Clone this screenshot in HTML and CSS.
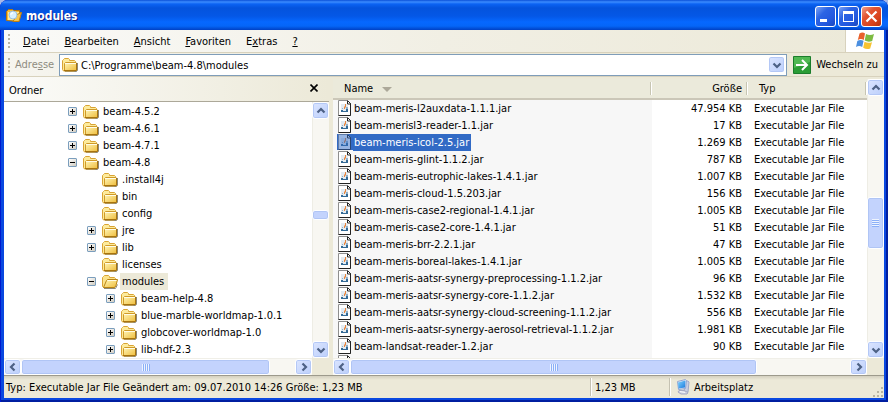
FILE: index.html
```html
<!DOCTYPE html>
<html lang="de">
<head>
<meta charset="utf-8">
<title>modules</title>
<link rel="stylesheet" href="styles.css">
</head>
<body>
<svg class="sprites" aria-hidden="true">
  <defs>
    <linearGradient id="g-folder" x1="0" y1="0" x2="1" y2="1"><stop offset="0" stop-color="#fff6b8"/><stop offset="1" stop-color="#efbd3c"/></linearGradient>
    <linearGradient id="g-screen" x1="0" y1="0" x2="1" y2="1"><stop offset="0" stop-color="#7fd4ff"/><stop offset="1" stop-color="#1c78dc"/></linearGradient>
    <symbol id="folder" viewBox="0 0 16 16">
      <path d="M3 14.500h11.500l1-1V6" fill="none" stroke="#8d8877"/>
      <path d="M.5 12.500v-9l1-1 1-1h4l1 1v1h5l1 1v8.500l-1 1h-11z" fill="#fdeb9c" stroke="#d9a434"/>
      <path d="M2.500 13.500v-7l1-1h10.500l.5.500v7.500z" fill="url(#g-folder)" stroke="#d09a28"/>
      <path d="M3 6.500h11" stroke="#fffce6"/>
      <path d="M2 13.500h12.500V6" fill="none" stroke="#a8740f"/>
    </symbol>
    <symbol id="folder-open" viewBox="0 0 16 16">
      <path d="M2 14.500h11.500l2-4" fill="none" stroke="#8d8877"/>
      <path d="M.5 12.500v-9l1-1 1-1h4l1 1v1h5l1 1v8l-1 1h-11z" fill="#fbe28a" stroke="#d9a434"/>
      <path d="M1.500 13.500l3-7 1-1h10l-1.500 6-1.500 2z" fill="url(#g-folder)" stroke="#b98415"/>
      <path d="M5.500 6.500h9" stroke="#fffce6"/>
    </symbol>
    <symbol id="jar" viewBox="0 0 16 16">
      <path d="M1.500.500h9l3 3v12h-12z" fill="#fff" stroke="#8e8e8e"/>
      <path d="M10.500 1v3h3.500M10.500.500l3 3v12h-12" fill="none" stroke="#222"/>
      <path d="M4 4h6v1h1v7H4z" fill="#e3ebf2"/>
      <path d="M4 10h2v1h3v-2h2v3H4z" fill="#336a96"/>
      <path d="M5 8h1v1H5zM9 7h2v2H9z" fill="#8fb0ca"/>
      <path d="M7 9V7l1-1V4h1v3L8 8v1z" fill="#e9853a"/>
    </symbol>
    <symbol id="computer" viewBox="0 0 16 16">
      <path d="M10 2h3l1 1-1 10-4 1z" fill="#c9cfe4" stroke="#a0a8c8"/>
      <path d="M2.500 2.500l8-2 1 1-1 8-7 1z" fill="#dfe9f8" stroke="#93a5d0"/>
      <path d="M3 3.500l7.500-2-.5 7-6.500 1z" fill="url(#g-screen)"/>
      <path d="M4 11.500h5l4 2-1 1.500H6l-3-2z" fill="#d3d4e2" stroke="#a5a8c2"/>
      <path d="M5 12.500l5 1" stroke="#f7f8fc"/>
    </symbol>
    <symbol id="chevron" viewBox="0 0 10 10"><path d="M1.500 3.500L5 7l3.500-3.500" fill="none" stroke="#4d6185" stroke-width="2.200"/></symbol>
  </defs>
</svg>

<main class="window">
  <header class="titlebar">
    <svg class="icon" viewBox="0 0 16 16"><path d="M.5 12.500v-9l2-2h4l1 1h6v2h1.500l-2 9z" fill="#f3ba35" stroke="#b5770f"/><path d="M2 12V4h11v8z" fill="#fdeb9c"/><path d="M11 6.500l4.500-2-2.500 9H7z" fill="#f6c64c" stroke="#bb7e15"/><circle cx="7" cy="7" r="4" fill="#d7f0ff" stroke="#9cc0dc"/><path d="M4.500 6.500l2.500-2" stroke="#fff" stroke-width="1.500"/></svg>
    <h1>modules</h1>
    <button class="caption" aria-label="Minimieren"><svg viewBox="0 0 19 19"><path d="M4 12h7v3H4z" fill="#fff"/></svg></button>
    <button class="caption" aria-label="Maximieren"><svg viewBox="0 0 19 19"><path d="M4 4h11v11H4zM5 7v7h9V7z" fill="#fff" fill-rule="evenodd"/></svg></button>
    <button class="caption close" aria-label="Schließen"><svg viewBox="0 0 19 19"><path d="M4.500 4.500l10 10m0-10l-10 10" stroke="#fff" stroke-width="2.200"/></svg></button>
  </header>

  <nav class="menubar">
    <span class="grip"></span>
    <button><u>D</u>atei</button><button><u>B</u>earbeiten</button><button><u>A</u>nsicht</button><button><u>F</u>avoriten</button><button>E<u>x</u>tras</button><button><u>?</u></button>
    <span class="flag"><svg viewBox="0 0 20 18">
      <path d="M4.500 1.500q3-2 5.500 0l-1.200 6.500q-3-2-6 0z" fill="#e8612c"/>
      <path d="M11 2q4 2 8 0l-1.800 7q-4 1.500-7.500-.5z" fill="#7dbb42"/>
      <path d="M2.300 9q3-2 6.300-.2L7.200 15q-3-1.800-6.200 0z" fill="#4b8fe0"/>
      <path d="M9.500 9.700q3.500 2 7.500.5l-1.800 6.300q-3.500 1.500-7-.7z" fill="#f7c331"/>
    </svg></span>
  </nav>

  <form class="addressbar">
    <span class="grip"></span>
    <label for="address">Adre<u>s</u>se</label>
    <div class="field">
      <svg class="icon"><use href="#folder"/></svg>
      <input id="address" type="text" value="C:\Programme\beam-4.8\modules">
      <button type="button" class="step down" aria-label="Verlauf"><svg><use href="#chevron"/></svg></button>
    </div>
    <button type="button" class="go"><svg viewBox="0 0 18 18"><path d="M.5.500h17v17H.5z" fill="#2b9c35" stroke="#1b7d2b"/><path d="M1 1h16v5L1 12z" fill="#4fb852"/><path d="M3 9h11M9 4l5 5-5 5" fill="none" stroke="#fff" stroke-width="2"/></svg>Wechseln zu</button>
  </form>

  <div class="body">
    <section class="folders">
      <header class="pane-title"><h2>Ordner</h2><button aria-label="Ordnerleiste schließen"><svg viewBox="0 0 8 8"><path d="M.5.500l7 7m0-7l-7 7" stroke="#000" stroke-width="1.600"/></svg></button></header>
      <ul class="tree">
        <li class="l1"><button class="expand" aria-label="Erweitern"></button><svg class="icon"><use href="#folder"/></svg><span>beam-4.5.2</span></li>
        <li class="l1"><button class="expand" aria-label="Erweitern"></button><svg class="icon"><use href="#folder"/></svg><span>beam-4.6.1</span></li>
        <li class="l1"><button class="expand" aria-label="Erweitern"></button><svg class="icon"><use href="#folder"/></svg><span>beam-4.7.1</span></li>
        <li class="l1"><button class="expand opened" aria-label="Reduzieren"></button><svg class="icon"><use href="#folder"/></svg><span>beam-4.8</span></li>
        <li class="l2"><i class="leaf"></i><svg class="icon"><use href="#folder"/></svg><span>.install4j</span></li>
        <li class="l2"><i class="leaf"></i><svg class="icon"><use href="#folder"/></svg><span>bin</span></li>
        <li class="l2"><i class="leaf"></i><svg class="icon"><use href="#folder"/></svg><span>config</span></li>
        <li class="l2"><button class="expand" aria-label="Erweitern"></button><svg class="icon"><use href="#folder"/></svg><span>jre</span></li>
        <li class="l2"><button class="expand" aria-label="Erweitern"></button><svg class="icon"><use href="#folder"/></svg><span>lib</span></li>
        <li class="l2"><i class="leaf"></i><svg class="icon"><use href="#folder"/></svg><span>licenses</span></li>
        <li class="l2"><button class="expand opened" aria-label="Reduzieren"></button><svg class="icon"><use href="#folder-open"/></svg><span class="current">modules</span></li>
        <li class="l3"><button class="expand" aria-label="Erweitern"></button><svg class="icon"><use href="#folder"/></svg><span>beam-help-4.8</span></li>
        <li class="l3"><button class="expand" aria-label="Erweitern"></button><svg class="icon"><use href="#folder"/></svg><span>blue-marble-worldmap-1.0.1</span></li>
        <li class="l3"><button class="expand" aria-label="Erweitern"></button><svg class="icon"><use href="#folder"/></svg><span>globcover-worldmap-1.0</span></li>
        <li class="l3"><button class="expand" aria-label="Erweitern"></button><svg class="icon"><use href="#folder"/></svg><span>lib-hdf-2.3</span></li>
      </ul>
      <div class="scroll vertical tree-v"><button class="step up" aria-label="Nach oben"><svg><use href="#chevron"/></svg></button><span class="before"></span><span class="thumb"></span><span class="after"></span><button class="step down" aria-label="Nach unten"><svg><use href="#chevron"/></svg></button></div>
      <div class="scroll horizontal tree-h"><button class="step left" aria-label="Nach links"><svg><use href="#chevron"/></svg></button><span class="thumb"><i class="ridges"></i></span><span class="after"></span><button class="step right" aria-label="Nach rechts"><svg><use href="#chevron"/></svg></button></div>
    </section>

    <section class="files">
      <div class="list">
        <table>
          <colgroup><col class="c-name"><col class="c-size"><col></colgroup>
          <thead><tr><th>Name<i class="sort"></i></th><th class="size">Größe</th><th>Typ</th></tr></thead>
          <tbody>
            <tr><td><svg class="icon"><use href="#jar"/></svg><span>beam-meris-l2auxdata-1.1.1.jar</span></td><td>47.954 KB</td><td>Executable Jar File</td></tr>
            <tr><td><svg class="icon"><use href="#jar"/></svg><span>beam-merisl3-reader-1.1.jar</span></td><td>17 KB</td><td>Executable Jar File</td></tr>
            <tr class="selected"><td><svg class="icon"><use href="#jar"/></svg><span>beam-meris-icol-2.5.jar</span></td><td>1.269 KB</td><td>Executable Jar File</td></tr>
            <tr><td><svg class="icon"><use href="#jar"/></svg><span>beam-meris-glint-1.1.2.jar</span></td><td>787 KB</td><td>Executable Jar File</td></tr>
            <tr><td><svg class="icon"><use href="#jar"/></svg><span>beam-meris-eutrophic-lakes-1.4.1.jar</span></td><td>1.007 KB</td><td>Executable Jar File</td></tr>
            <tr><td><svg class="icon"><use href="#jar"/></svg><span>beam-meris-cloud-1.5.203.jar</span></td><td>156 KB</td><td>Executable Jar File</td></tr>
            <tr><td><svg class="icon"><use href="#jar"/></svg><span>beam-meris-case2-regional-1.4.1.jar</span></td><td>1.005 KB</td><td>Executable Jar File</td></tr>
            <tr><td><svg class="icon"><use href="#jar"/></svg><span>beam-meris-case2-core-1.4.1.jar</span></td><td>51 KB</td><td>Executable Jar File</td></tr>
            <tr><td><svg class="icon"><use href="#jar"/></svg><span>beam-meris-brr-2.2.1.jar</span></td><td>47 KB</td><td>Executable Jar File</td></tr>
            <tr><td><svg class="icon"><use href="#jar"/></svg><span>beam-meris-boreal-lakes-1.4.1.jar</span></td><td>1.005 KB</td><td>Executable Jar File</td></tr>
            <tr><td><svg class="icon"><use href="#jar"/></svg><span>beam-meris-aatsr-synergy-preprocessing-1.1.2.jar</span></td><td>96 KB</td><td>Executable Jar File</td></tr>
            <tr><td><svg class="icon"><use href="#jar"/></svg><span>beam-meris-aatsr-synergy-core-1.1.2.jar</span></td><td>1.532 KB</td><td>Executable Jar File</td></tr>
            <tr><td><svg class="icon"><use href="#jar"/></svg><span>beam-meris-aatsr-synergy-cloud-screening-1.1.2.jar</span></td><td>556 KB</td><td>Executable Jar File</td></tr>
            <tr><td><svg class="icon"><use href="#jar"/></svg><span>beam-meris-aatsr-synergy-aerosol-retrieval-1.1.2.jar</span></td><td>1.981 KB</td><td>Executable Jar File</td></tr>
            <tr><td><svg class="icon"><use href="#jar"/></svg><span>beam-landsat-reader-1.2.jar</span></td><td>90 KB</td><td>Executable Jar File</td></tr>
            <tr><td><svg class="icon"><use href="#jar"/></svg></td><td></td><td></td></tr>
          </tbody>
        </table>
      </div>
      <div class="scroll vertical list-v"><button class="step up" aria-label="Nach oben"><svg><use href="#chevron"/></svg></button><span class="before"></span><span class="thumb"><i class="ridges"></i></span><span class="after"></span><button class="step down" aria-label="Nach unten"><svg><use href="#chevron"/></svg></button></div>
      <div class="scroll horizontal list-h"><button class="step left" aria-label="Nach links"><svg><use href="#chevron"/></svg></button><span class="thumb"><i class="ridges"></i></span><span class="after"></span><button class="step right" aria-label="Nach rechts"><svg><use href="#chevron"/></svg></button></div>
    </section>
  </div>

  <footer class="statusbar">
    <span class="details">Typ: Executable Jar File Geändert am: 09.07.2010 14:26 Größe: 1,23 MB</span>
    <span class="total">1,23 MB</span>
    <span class="zone"><svg class="icon"><use href="#computer"/></svg>Arbeitsplatz</span>
    <svg class="resize" viewBox="0 0 12 12"><path d="M9 1h2v2H9zM5 5h2v2H5zM9 5h2v2H9zM1 9h2v2H1zM5 9h2v2H5zM9 9h2v2H9z" fill="#b8b4a2"/></svg>
  </footer>
</main>
</body>
</html>
```

FILE: styles.css
```css
* { box-sizing: border-box; }

body {
  margin: 0;
  background: #a9b9e8;
  color: #000;
  font: 11px/17px "DejaVu Sans Condensed", "DejaVu Sans", sans-serif;
}

button, input {
  margin: 0;
  padding: 0;
  border: 0;
  background: none;
  color: inherit;
  font: inherit;
}

h1, h2, ul { margin: 0; padding: 0; font: inherit; }
svg { display: block; flex: none; }
.sprites { position: absolute; width: 0; height: 0; }
.icon { width: 16px; height: 16px; }

.window {
  display: flex;
  flex-direction: column;
  height: 100vh;
  padding: 0 4px 4px;
  overflow: hidden;
  border-radius: 8px 8px 0 0;
  background: #0a48e0;
  box-shadow: inset 1px 0 #0019cf, inset -2px 0 #001ea0, inset 0 -2px #001ea0;
}

/* Title bar */
.titlebar {
  display: flex;
  flex: none;
  align-items: center;
  gap: 2px;
  height: 30px;
  margin: 0 -4px;
  padding: 2px 6px 0;
  background: linear-gradient(#0a50d8, #3b8cff 2px, #0b63f3 4px, #0453dd 8px, #0457e6 16px, #0668ff 22px, #0566f8 26px, #0040c4);
}
.titlebar h1 {
  flex: 1;
  padding-left: 2px;
  color: #fff;
  font: bold 12px/17px "DejaVu Sans Condensed", "DejaVu Sans", sans-serif;
  text-shadow: 1px 1px #0a1883;
}
.caption {
  width: 21px;
  height: 21px;
  border: 1px solid #fff;
  border-radius: 3px;
  background: linear-gradient(135deg, #7ba2f4, #2c64e4 35%, #2358df 70%, #1b48bd);
}
.caption svg { width: 19px; height: 19px; }
.close { background: linear-gradient(135deg, #f0a08b, #e25432 35%, #d9431d 70%, #b3330f); }

/* Menu and address bars */
.menubar {
  display: flex;
  flex: none;
  align-items: center;
  height: 23px;
  border-bottom: 1px solid #d8d2bd;
  background: linear-gradient(90deg, #fafaf8, #f1efe4 50%, #ece9d8);
}
.menubar button { margin-right: 15px; }
.grip {
  width: 2px;
  height: 14px;
  margin: 0 13px 0 4px;
  background: repeating-linear-gradient(#b9b5a4 0 2px, transparent 2px 4px);
}
.flag {
  display: flex;
  align-self: stretch;
  align-items: center;
  justify-content: center;
  width: 39px;
  margin-left: auto;
  border-left: 1px solid #d8d2bd;
  background: #fff;
}
.flag svg { width: 20px; height: 18px; }

.addressbar {
  display: flex;
  flex: none;
  align-items: center;
  height: 24px;
  padding-right: 6px;
  border-bottom: 1px solid #d8d2bd;
  background: linear-gradient(90deg, #f6f5ef, #ece9d8 50%);
}
.addressbar .grip { margin-right: 5px; }
.addressbar label { width: 44px; color: #8f8c80; }
.field {
  display: flex;
  flex: 1;
  align-items: center;
  height: 22px;
  padding: 0 1px 0 2px;
  border: 1px solid #7f9db9;
  background: #fff;
}
.field input { flex: 1; min-width: 0; height: 20px; padding: 2px 0 0 3px; outline: 0; }
.go { display: flex; align-items: center; gap: 5px; margin-left: 6px; white-space: nowrap; }
.go svg { width: 18px; height: 18px; }

/* Panes */
.body {
  display: flex;
  flex: 1;
  gap: 4px;
  min-height: 0;
  background: #ece9d8;
}
.folders, .files {
  display: grid;
  grid-template-columns: minmax(0, 1fr) 17px;
  min-height: 0;
}
.folders { flex: 0 0 325px; grid-template-rows: 25px minmax(0, 1fr) 17px; }
.files { flex: 1; grid-template-rows: minmax(0, 1fr) 17px; min-width: 0; padding-top: 2px; }

.pane-title {
  display: flex;
  grid-column: 1 / -1;
  align-items: center;
  justify-content: space-between;
  padding: 3px 11px 0 5px;
  border-bottom: 1px solid #aca899;
  background: linear-gradient(90deg, #fbfbf9, #ece9d8);
}
.pane-title button { padding: 0 0 6px; }
.pane-title svg { width: 8px; height: 8px; }

.tree { overflow: hidden; padding-top: 1px; background: #fff; list-style: none; }
.tree li { display: flex; align-items: center; height: 17px; }
.tree .icon { margin: 0 2px 0 6px; }
.tree span { padding: 0 4px 0 2px; white-space: nowrap; }
.tree .current { background: #ece9d8; }
.l1 { padding-left: 64px; }
.l2 { padding-left: 83px; }
.l3 { padding-left: 102px; }
.leaf { width: 9px; }
.expand {
  width: 9px;
  height: 9px;
  border: 1px solid #7b9ebd;
  border-radius: 1px;
  background:
    linear-gradient(#000, #000) center / 5px 1px no-repeat,
    linear-gradient(#000, #000) center / 1px 5px no-repeat,
    linear-gradient(135deg, #fff, #d0cbbf);
}
.expand.opened {
  background:
    linear-gradient(#000, #000) center / 5px 1px no-repeat,
    linear-gradient(135deg, #fff, #d0cbbf);
}

/* File list */
.list { overflow: hidden; background: linear-gradient(90deg, #f7f7f7 319px, #fff 319px); }
table { width: 100%; border-collapse: collapse; table-layout: fixed; }
.c-name { width: 319px; }
.c-size { width: 96px; }
th {
  height: 20px;
  padding: 0 9px 0 11px;
  border-bottom: 2px solid #cbc7b8;
  background: linear-gradient(90deg, #fff, #fff) right 3px / 1px 13px no-repeat, linear-gradient(90deg, #c7c5b2, #c7c5b2) calc(100% - 1px) 3px / 1px 13px no-repeat, #ebeadb;
  font-weight: normal;
  text-align: left;
}
th.size { padding-right: 6px; text-align: right; }
.sort {
  display: inline-block;
  margin-left: 9px;
  border: 5px solid transparent;
  border-top-color: #aca899;
  border-bottom: 0;
  vertical-align: middle;
}
td { height: 17px; padding: 0 6px; white-space: nowrap; }
td:first-child { display: flex; padding: 0 0 0 4px; }
td:first-child span { padding: 0 2px 0 1px; }
td:nth-child(2) { text-align: right; }
.selected span { background: #316ac5; color: #fff; }
.selected .icon { background: #316ac5; }
.selected use { opacity: 0.5; }

/* Scroll bars */
.scroll { display: flex; background: #f8f7f2; }
.vertical { flex-direction: column; box-shadow: inset 1px 0 #eeede5; }
.horizontal { border-top: 1px solid #f0efe8; }
.step {
  display: flex;
  flex: none;
  align-items: center;
  justify-content: center;
  width: 17px;
  height: 17px;
  border: 1px solid #fff;
  border-radius: 3px;
  background: linear-gradient(135deg, #dbe5ff, #bccffb);
  box-shadow: inset 0 0 0 1px #b4c8f6;
}
.step svg { width: 10px; height: 10px; }
.horizontal .step { height: 16px; }
.up svg { transform: rotate(180deg); }
.left svg { transform: rotate(90deg); }
.right svg { transform: rotate(-90deg); }
.thumb {
  display: flex;
  align-items: center;
  justify-content: center;
  border: 1px solid #fff;
  border-radius: 3px;
  background: #c3d3fd;
  box-shadow: inset 0 0 0 1px #b0c5f5;
}
.ridges { width: 8px; height: 7px; background: repeating-linear-gradient(90deg, #eef4fe 0 1px, #8cb0f8 1px 2px); }
.vertical .ridges { width: 7px; height: 8px; background: repeating-linear-gradient(#eef4fe 0 1px, #8cb0f8 1px 2px); }

.tree-v .before { flex: 92; }
.tree-v .thumb { flex: 8; }
.tree-v .after { flex: 122; }
.tree-h .thumb { flex: 249; }
.tree-h .after { flex: 25; }
.list-v .before { flex: 102; }
.list-v .thumb { flex: 50; }
.list-v .after { flex: 93; }
.list-h .thumb { flex: 407; }
.list-h .after { flex: 93; }

/* Status bar */
.statusbar {
  display: flex;
  flex: none;
  align-items: center;
  height: 23px;
  border-top: 1px solid #9d9a8c;
  background: linear-gradient(#d4d0c0, #ece9d8 4px);
  white-space: nowrap;
}
.details { flex: 1; padding-left: 2px; }
.total, .zone {
  display: flex;
  align-items: center;
  height: 18px;
  padding-left: 4px;
  border-left: 1px solid #c5c2b2;
  box-shadow: inset 1px 0 #fff;
}
.total { width: 79px; }
.zone { gap: 3px; width: 203px; padding-left: 5px; }
.resize { width: 12px; height: 12px; align-self: flex-end; }
```
